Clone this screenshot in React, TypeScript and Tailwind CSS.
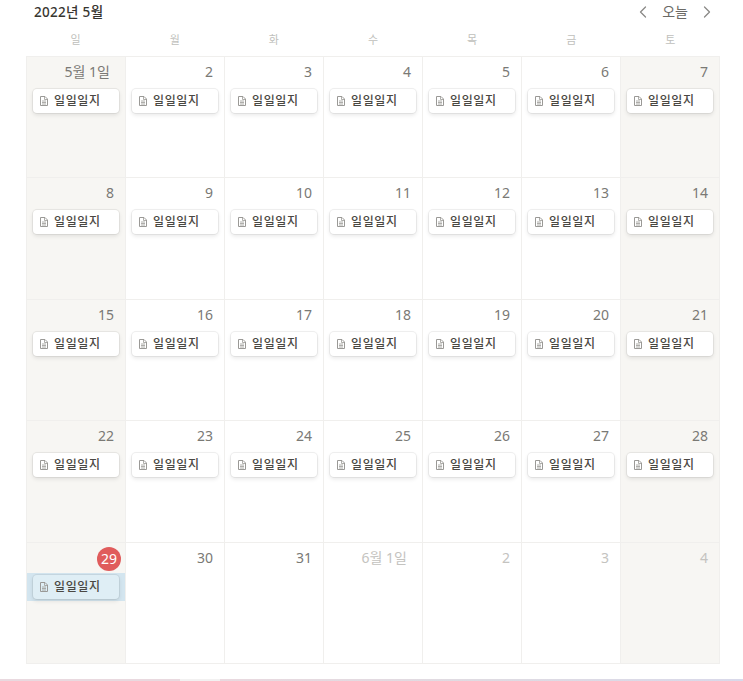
import { ChevronLeft, ChevronRight } from 'lucide-react';

const weekdays = ['일', '월', '화', '수', '목', '금', '토'];

type Day = { label: string; muted?: boolean; today?: boolean; entry?: boolean };

const weeks: Day[][] = [
  ['5월 1일', '2', '3', '4', '5', '6', '7'],
  ['8', '9', '10', '11', '12', '13', '14'],
  ['15', '16', '17', '18', '19', '20', '21'],
  ['22', '23', '24', '25', '26', '27', '28'],
].map((w) => w.map((label) => ({ label, entry: true })));

weeks.push([
  { label: '29', today: true, entry: true },
  { label: '30' },
  { label: '31' },
  { label: '6월 1일', muted: true },
  { label: '2', muted: true },
  { label: '3', muted: true },
  { label: '4', muted: true },
]);

function PageIcon() {
  return (
    <svg width="8" height="10" viewBox="0 0 8 10" className="shrink-0 text-[#9a9996]">
      <path d="M.5 .5h4.5L7.5 3v6.5H.5z" fill="none" stroke="currentColor" strokeWidth="1" />
      <path d="M4.5 .5v3h3" fill="none" stroke="currentColor" strokeWidth="0.8" />
      <path d="M2 5h4M2 6.5h4M2 8h4" stroke="currentColor" strokeWidth="0.8" />
    </svg>
  );
}

function Entry({ selected }: { selected?: boolean }) {
  return (
    <div
      className={
        'flex h-6 items-center gap-[6px] rounded-[4px] pl-[7px] text-xs font-medium tracking-[0.6px] text-[#4a4843] shadow-[0_0_0_1px_rgba(15,15,15,0.06),0_2px_4px_rgba(15,15,15,0.1)] ' +
        (selected ? 'bg-[#dfeef5]' : 'bg-white')
      }
    >
      <PageIcon />
      <span>일일일지</span>
    </div>
  );
}

function DayCell({ day, weekend }: { day: Day; weekend: boolean }) {
  return (
    <div
      className={
        'h-[121.4px] border-r border-b border-[#f0efed] ' + (weekend ? 'bg-[#f7f6f3]' : 'bg-white')
      }
    >
      <div className="flex h-[30px] items-start justify-end pr-[11px] pt-[5px] text-sm leading-5">
        {day.today ? (
          <span className="-mr-[7px] -mt-[1px] flex h-6 w-6 items-center justify-center rounded-full bg-[#e05c5c] text-white">
            {day.label}
          </span>
        ) : (
          <span
            className={
              (day.muted ? 'text-[#c4c3c0]' : 'text-[#7a7975]') +
              (day.label.includes('일') ? ' mr-[4px]' : '')
            }
          >
            {day.label}
          </span>
        )}
      </div>
      {day.entry && (
        <div className={'px-[6px] py-[2px]' + (day.today ? ' bg-[#d3e5ef]' : '')}>
          <Entry selected={day.today} />
        </div>
      )}
    </div>
  );
}

export default function App() {
  return (
    <div
      className="flex h-[681px] w-[743px] flex-col overflow-hidden bg-white"
      style={{ fontFamily: '"Noto Sans", "Noto Sans CJK KR", sans-serif' }}
    >
      <div className="flex h-6 items-center justify-between pl-[34px] pr-[26px]">
        <span className="text-[13.5px] font-medium tracking-[0.3px] text-[#37352f]">2022년 5월</span>
        <div className="flex items-center gap-[9px] text-sm text-[#6b6a66]">
          <ChevronLeft size={20} strokeWidth={1.5} className="text-[#8a8986]" />
          <span>오늘</span>
          <ChevronRight size={20} strokeWidth={1.5} className="text-[#8a8986]" />
        </div>
      </div>
      <div className="ml-[26px] grid h-[32px] w-[694px] grid-cols-7 items-center">
        {weekdays.map((d) => (
          <span key={d} className="text-center text-[11px] text-[#c0bfbc]">
            {d}
          </span>
        ))}
      </div>
      <div className="ml-[26px] grid w-[694px] grid-cols-7 border-t border-l border-[#f0efed]">
        {weeks.map((week) =>
          week.map((day, i) => (
            <DayCell key={week[0].label + i} day={day} weekend={i === 0 || i === 6} />
          )),
        )}
      </div>
      <div className="mt-auto flex h-[2px]">
        <div className="w-[180px] bg-[#e9d9df]" />
        <div className="w-[40px] bg-[#f2f1f1]" />
        <div className="flex-1 bg-gradient-to-r from-[#e9d9df] via-[#dfdbe2] to-[#d9d9ea]" />
      </div>
    </div>
  );
}
